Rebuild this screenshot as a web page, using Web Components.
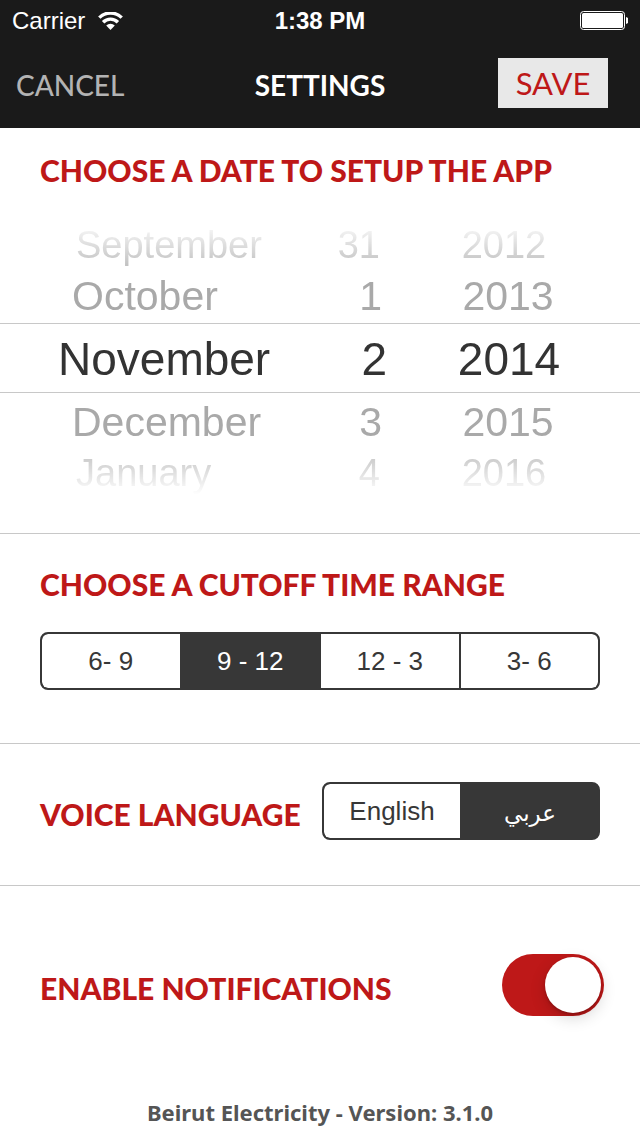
<!DOCTYPE html>
<html lang="en">
<head>
<meta charset="utf-8">
<meta name="viewport" content="width=device-width, initial-scale=1">
<title>Settings</title>
<style>
    body {
        margin: 0;
        background: #fff;
    }
</style>
</head>
<body>
<settings-page></settings-page>

<script>
class StatusBar extends HTMLElement {
    constructor() {
        super();
        this.attachShadow({ mode: "open" });
    }
    connectedCallback() {
        this.shadowRoot.innerHTML = `
        <style>
            :host {
                display: grid;
                grid-template-columns: 1fr auto 1fr;
                align-items: center;
                height: 40px;
                box-sizing: border-box;
                padding: 2px 12px 0;
                background: #1a1a1a;
                color: #fff;
                font: 24px/38px "Liberation Sans", Arial, sans-serif;
            }
            .carrier {
                display: flex;
                align-items: center;
                gap: 13px;
            }
            .time { font-weight: bold; }
            .battery { justify-self: end; }
            svg { display: block; }
        </style>
        <div class="carrier">
            <span>${this.getAttribute("carrier")}</span>
            <svg width="25" height="19" viewBox="0 0 25 19" fill="none" stroke="#fff" stroke-width="3.400">
                <path d="M1.3 5.6 A16 16 0 0 1 23.7 5.6"/>
                <path d="M5.1 10.2 A10.4 10.4 0 0 1 19.9 10.2"/>
                <path d="M8.2 13.6 A6 6 0 0 1 16.8 13.6 L12.5 18 Z" fill="#fff" stroke="none"/>
            </svg>
        </div>
        <span class="time">${this.getAttribute("time")}</span>
        <svg class="battery" width="48" height="20" viewBox="0 0 48 20">
            <rect x="0.5" y="0.5" width="44" height="18" rx="3" fill="none" stroke="#fff"/>
            <rect x="2" y="2" width="41" height="15" rx="1.5" fill="#fff"/>
            <path d="M46 6 q3 1 3 3.500 q0 2.500 -3 3.500 Z" fill="#fff"/>
        </svg>
    `;
    }
}

class NavBar extends HTMLElement {
    constructor() {
        super();
        this.attachShadow({ mode: "open" });
    }
    connectedCallback() {
        this.shadowRoot.innerHTML = `
        <style>
            :host {
                display: grid;
                grid-template-columns: 1fr auto 1fr;
                align-items: center;
                height: 88px;
                padding: 2px 32px 0 16px;
                box-sizing: border-box;
                background: #1a1a1a;
                color: #fff;
            }
            h1 {
                margin: 0 0 0 16px;
                font-size: 28px;
                line-height: 40px;
                font-weight: 700;
            }
            button {
                border: 0;
                padding: 0;
                font: inherit;
                line-height: 40px;
                cursor: pointer;
            }
            .cancel {
                justify-self: start;
                background: none;
                color: #b3b3b3;
                font-size: 28px;
                font-weight: 500;
            }
            .save {
                justify-self: end;
                align-self: start;
                width: 110px;
                height: 50px;
                margin-top: 16px;
                background: #e8e8e8;
                color: #be1818;
                font-size: 31px;
            }
        </style>
        <button class="cancel" type="button">CANCEL</button>
        <h1><slot></slot></h1>
        <button class="save" type="button">SAVE</button>
    `;
    }
}

class SettingsSection extends HTMLElement {
    constructor() {
        super();
        this.attachShadow({ mode: "open" });
    }
    connectedCallback() {
        this.shadowRoot.innerHTML = `
        <style>
            :host {
                display: block;
                border-bottom: 1px solid #c8c8c8;
            }
            :host([last]) { border-bottom: 0; }
            .head {
                display: flex;
                align-items: center;
                justify-content: space-between;
                padding: 0 40px;
            }
            h2 {
                margin: 0;
                padding-top: 6px;
                color: #be1818;
                font-size: 30px;
                line-height: 40px;
                font-weight: 900;
                white-space: nowrap;
            }
        </style>
        <div class="head">
            <h2>${this.getAttribute("heading")}</h2>
            <slot name="control"></slot>
        </div>
        <slot></slot>
    `;
    }
}

class PickerWheel extends HTMLElement {
    constructor() {
        super();
        this.attachShadow({ mode: "open" });
    }
    connectedCallback() {
        const items = this.getAttribute("items").split(",");
        const rows = ["outer", "near", "selected", "near", "outer"];
        this.shadowRoot.innerHTML = `
        <style>
            :host {
                display: flex;
                flex-direction: column;
                font-family: "Liberation Sans", Arial, sans-serif;
            }
            button {
                border: 0;
                padding: 0;
                background: none;
                font: inherit;
                text-align: var(--wheel-align, left);
                white-space: nowrap;
            }
            .outer {
                height: 48px;
                padding: var(--outer-inset, 0);
                color: #bbb;
                font-size: 38px;
                line-height: 48px;
            }
            .near {
                height: 54px;
                padding: var(--near-inset, 0);
                color: #a9a9a9;
                font-size: 41px;
                line-height: 54px;
            }
            .selected {
                height: 70px;
                padding: var(--selected-inset, 0);
                border: solid #c8c8c8;
                border-width: 1px 0;
                color: #333;
                font-size: 46px;
                line-height: 70px;
            }
            .selected ~ button { padding-top: 2px; }
        </style>
        ${items.map((item, i) => `<button type="button" class="${rows[i]}">${item}</button>`).join("")}
    `;
    }
}

class DatePicker extends HTMLElement {
    constructor() {
        super();
        this.attachShadow({ mode: "open" });
    }
    connectedCallback() {
        this.shadowRoot.innerHTML = `
        <style>
            :host {
                display: grid;
                grid-template-columns: 300fr 100fr 240fr;
                -webkit-mask-image: linear-gradient(transparent 0, #000 18%, #000 82%, transparent 100%);
                mask-image: linear-gradient(transparent 0, #000 18%, #000 82%, transparent 100%);
            }
            .month {
                --selected-inset: 0 0 0 58px;
                --near-inset: 0 0 0 72px;
                --outer-inset: 0 0 0 76px;
            }
            .day {
                --wheel-align: right;
                --selected-inset: 0 13px 0 0;
                --near-inset: 0 18px 0 0;
                --outer-inset: 0 20px 0 0;
            }
            .year {
                --wheel-align: center;
                --selected-inset: 0 22px 0 0;
                --near-inset: 0 24px 0 0;
                --outer-inset: 0 32px 0 0;
            }
        </style>
        <picker-wheel class="month" items="September,October,November,December,January"></picker-wheel>
        <picker-wheel class="day" items="31,1,2,3,4"></picker-wheel>
        <picker-wheel class="year" items="2012,2013,2014,2015,2016"></picker-wheel>
    `;
    }
}

class SegmentedControl extends HTMLElement {
    constructor() {
        super();
        this.attachShadow({ mode: "open" });
    }
    connectedCallback() {
        const name = this.getAttribute("name");
        const selected = Number(this.getAttribute("selected"));
        const options = this.getAttribute("options").split(",");
        const lang = option => /[\u0600-\u06ff]/.test(option) ? "ar" : "en";
        this.shadowRoot.innerHTML = `
        <style>
            :host {
                display: flex;
                height: 58px;
                box-sizing: border-box;
                border: 2px solid #373737;
                border-radius: 8px;
                overflow: hidden;
                background: linear-gradient(#373737, #373737) border-box;
                color: #373737;
                font: 26px/54px "Liberation Sans", "DejaVu Sans", sans-serif;
            }
            label {
                flex: 1 1 0;
                border-right: 2px solid #373737;
                background: #fff;
                text-align: center;
                cursor: pointer;
            }
            label:first-of-type { border-radius: 6px 0 0 6px; }
            label:last-of-type {
                border-right: 0;
                border-radius: 0 6px 6px 0;
            }
            label:lang(ar) {
                font-size: 23px;
                line-height: 58px;
            }
            label:has(input:checked) {
                background: #373737;
                color: #fff;
            }
            input {
                appearance: none;
                width: 0;
                height: 0;
                margin: 0;
                position: absolute;
            }
        </style>
        ${options.map((option, i) => `<label lang="${lang(option)}"><input type="radio" name="${name}"${i === selected ? " checked" : ""}>${option}</label>`).join("")}
    `;
    }
}

class ToggleSwitch extends HTMLElement {
    constructor() {
        super();
        this.attachShadow({ mode: "open" });
    }
    connectedCallback() {
        this.shadowRoot.innerHTML = `
        <style>
            :host { display: block; }
            input {
                display: flex;
                appearance: none;
                width: 102px;
                height: 62px;
                box-sizing: border-box;
                margin: 0;
                padding: 3px;
                border-radius: 31px;
                background: #ccc;
                cursor: pointer;
            }
            input::before {
                content: "";
                width: 56px;
                height: 56px;
                border-radius: 50%;
                background: #fff;
                box-shadow: 0 5px 16px rgba(0, 0, 0, 0.16), 0 2px 3px rgba(0, 0, 0, 0.2);
            }
            input:checked {
                justify-content: flex-end;
                background: #be1818;
            }
        </style>
        <input type="checkbox" aria-label="${this.getAttribute("label")}" checked>
    `;
    }
}

class SettingsPage extends HTMLElement {
    constructor() {
        super();
        this.attachShadow({ mode: "open" });
    }
    connectedCallback() {
        this.shadowRoot.innerHTML = `
        <style>
            :host {
                display: flex;
                flex-direction: column;
                min-height: 100vh;
                font-family: Lato, "Open Sans", sans-serif;
            }
            .date { padding: 16px 0 38px; }
            date-picker { margin-top: 31px; }
            .cutoff { padding: 24px 0 53px; }
            .cutoff segmented-control { margin: 28px 40px 0; }
            .voice { padding: 38px 0 45px; }
            .voice segmented-control { width: 278px; }
            .notify { padding: 68px 0 0; }
            toggle-switch { margin-right: -4px; }
            footer {
                margin-top: auto;
                padding-bottom: 8px;
                color: #555;
                font-family: "Noto Sans", "Open Sans", sans-serif;
                font-size: 22px;
                line-height: 32px;
                font-weight: 700;
                text-align: center;
            }
        </style>
        <status-bar carrier="Carrier" time="1:38 PM"></status-bar>
        <nav-bar>SETTINGS</nav-bar>
        <settings-section class="date" heading="CHOOSE A DATE TO SETUP THE APP">
            <date-picker></date-picker>
        </settings-section>
        <settings-section class="cutoff" heading="CHOOSE A CUTOFF TIME RANGE">
            <segmented-control name="cutoff" options="6- 9,9 - 12,12 - 3,3- 6" selected="1"></segmented-control>
        </settings-section>
        <settings-section class="voice" heading="VOICE LANGUAGE">
            <segmented-control slot="control" name="voice" options="English,عربي" selected="1"></segmented-control>
        </settings-section>
        <settings-section class="notify" heading="ENABLE NOTIFICATIONS" last>
            <toggle-switch slot="control" label="Enable notifications"></toggle-switch>
        </settings-section>
        <footer>Beirut Electricity - Version: 3.1.0</footer>
    `;
    }
}

customElements.define("status-bar", StatusBar);
customElements.define("nav-bar", NavBar);
customElements.define("settings-section", SettingsSection);
customElements.define("picker-wheel", PickerWheel);
customElements.define("date-picker", DatePicker);
customElements.define("segmented-control", SegmentedControl);
customElements.define("toggle-switch", ToggleSwitch);
customElements.define("settings-page", SettingsPage);
</script>
</body>
</html>
